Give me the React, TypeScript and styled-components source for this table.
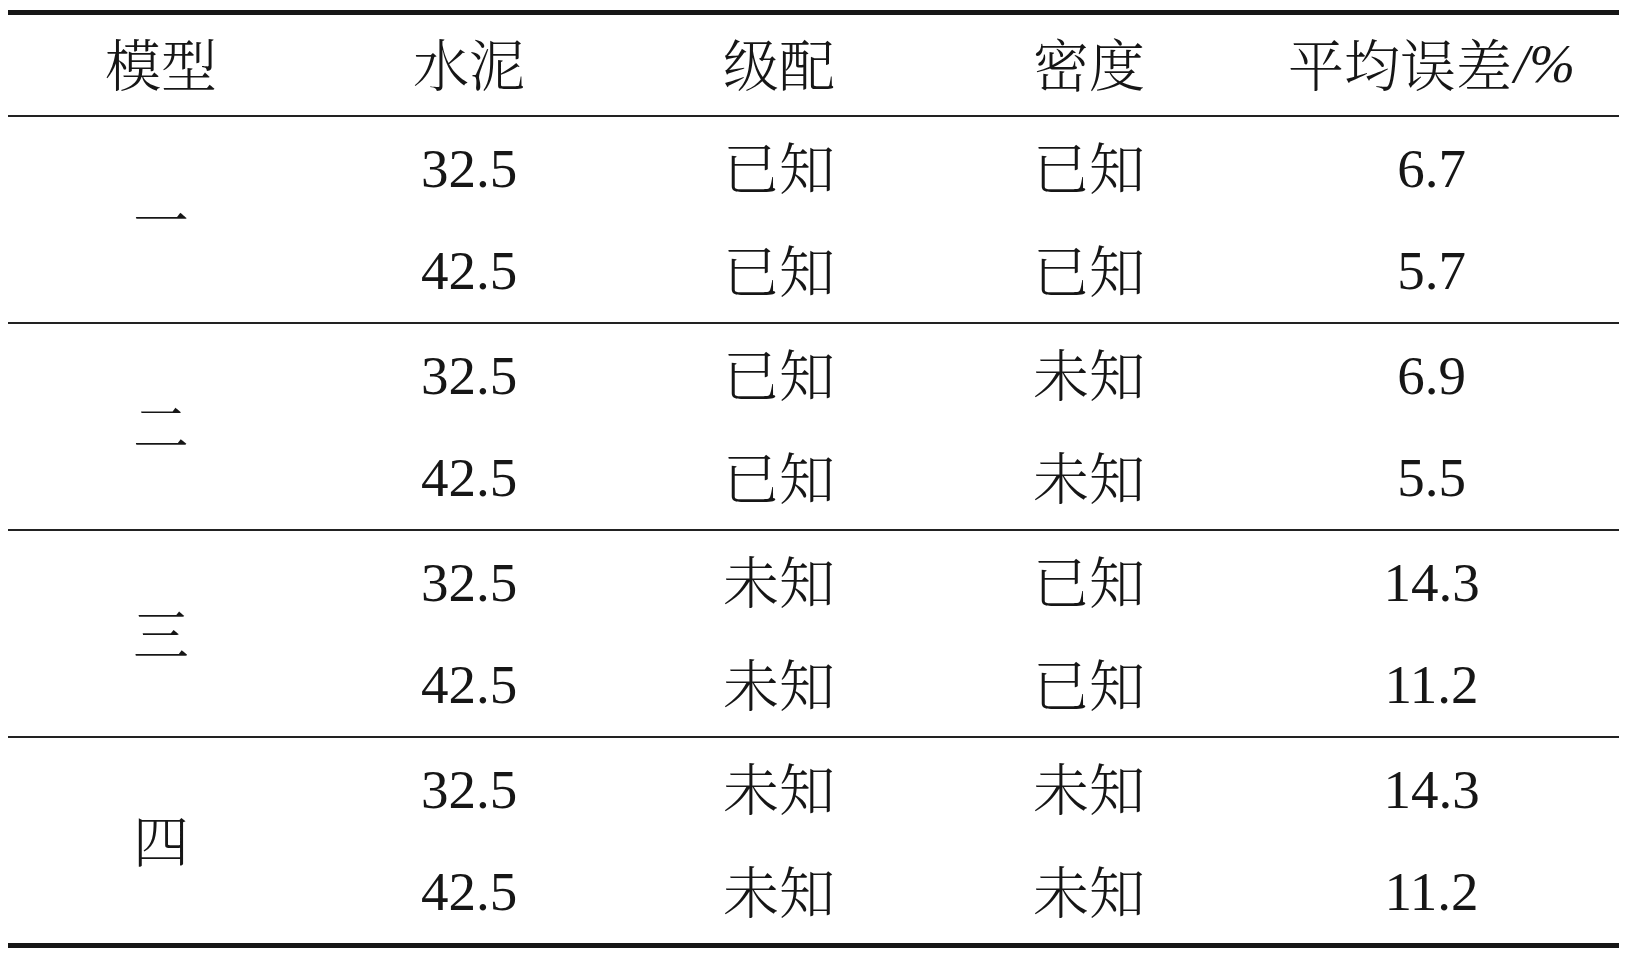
import React from "react";
import styled, { createGlobalStyle } from "styled-components";

const Global = createGlobalStyle`
  html, body { margin: 0; padding: 0; background: #ffffff; }
  body { width: 1631px; height: 957px; overflow: hidden; }
`;

const Page = styled.div`
  padding: 10px 12px 0 8px;
  width: 1611px;
  font-family: "Liberation Serif", "Noto Serif CJK SC", "Noto Sans CJK SC", serif;
  color: #161616;
`;

const Table = styled.div`
  border-top: 5px solid #161616;
  border-bottom: 5px solid #161616;
`;

const cols = "306px 310px 310px 310px 1fr";

const HeaderRow = styled.div`
  display: grid;
  grid-template-columns: ${cols};
  height: 100px;
  border-bottom: 2px solid #222;
`;

const Group = styled.div<{ $last?: boolean }>`
  display: grid;
  grid-template-columns: ${cols};
  grid-template-rows: 102.5px 102.5px;
  border-bottom: ${(p) => (p.$last ? "none" : "2px solid #222")};
`;

const Cell = styled.div<{ $span?: boolean }>`
  display: flex;
  align-items: center;
  justify-content: center;
  font-family: "Liberation Serif", serif;
  font-size: 55px;
  line-height: 1;
  grid-row: ${(p) => (p.$span ? "span 2" : "auto")};
`;

const Cjk = styled.span`
  font-family: "Noto Serif CJK SC", "Noto Sans CJK SC", serif;
  font-weight: 300;
  font-size: 56px;
  padding-bottom: 6px;
`;

const Unit = styled.span`
  font-family: "Liberation Serif", serif;
  font-style: italic;
  font-weight: 400;
  font-size: 55px;
  margin-left: 2px;
  padding-bottom: 4px;
`;

const groups = [
  { name: "一", rows: [["32.5", "已知", "已知", "6.7"], ["42.5", "已知", "已知", "5.7"]] },
  { name: "二", rows: [["32.5", "已知", "未知", "6.9"], ["42.5", "已知", "未知", "5.5"]] },
  { name: "三", rows: [["32.5", "未知", "已知", "14.3"], ["42.5", "未知", "已知", "11.2"]] },
  { name: "四", rows: [["32.5", "未知", "未知", "14.3"], ["42.5", "未知", "未知", "11.2"]] },
];

export default function App() {
  return (
    <>
      <Global />
      <Page>
        <Table>
          <HeaderRow>
            <Cell><Cjk>模型</Cjk></Cell>
            <Cell><Cjk>水泥</Cjk></Cell>
            <Cell><Cjk>级配</Cjk></Cell>
            <Cell><Cjk>密度</Cjk></Cell>
            <Cell><Cjk>平均误差</Cjk><Unit>/%</Unit></Cell>
          </HeaderRow>
          {groups.map((g, gi) => (
            <Group key={g.name} $last={gi === groups.length - 1}>
              <Cell $span><Cjk>{g.name}</Cjk></Cell>
              {g.rows.map((r, ri) => (
                <React.Fragment key={ri}>
                  <Cell>{r[0]}</Cell>
                  <Cell><Cjk>{r[1]}</Cjk></Cell>
                  <Cell><Cjk>{r[2]}</Cjk></Cell>
                  <Cell>{r[3]}</Cell>
                </React.Fragment>
              ))}
            </Group>
          ))}
        </Table>
      </Page>
    </>
  );
}
